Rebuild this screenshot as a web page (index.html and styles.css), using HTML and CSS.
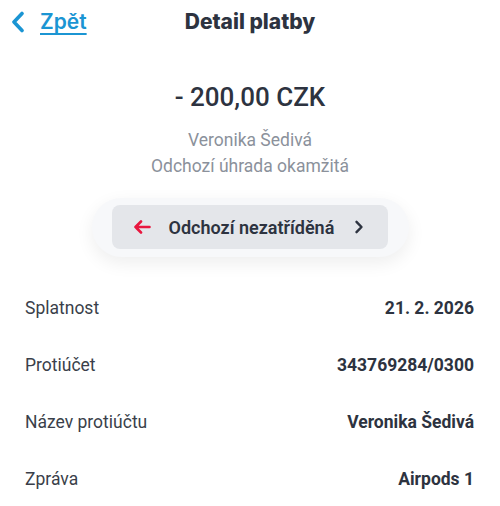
FILE: index.html
```html
<!DOCTYPE html>
<html>
<head>
  <title>Detail platby</title>
  <link rel="stylesheet" href="styles.css">
</head>
<body>
  <div class="header">
    <a class="back" href="#">
      <svg class="back-icon" width="14" height="22" viewBox="0 0 14 22">
        <path d="M11 2.5 L3 11 L11 19.5" fill="none" stroke="#1b95d3" stroke-width="3.6" stroke-linecap="round" stroke-linejoin="round"/>
      </svg>
      <span class="back-text">Zpět</span>
    </a>
    <h1>Detail platby</h1>
  </div>

  <div class="summary">
    <div class="amount">- 200,00 CZK</div>
    <div class="sub">Veronika Šedivá</div>
    <div class="sub">Odchozí úhrada okamžitá</div>
  </div>

  <div class="category-wrap">
    <div class="category-pill">
      <div class="category">
        <svg width="18" height="14" viewBox="0 0 18 14">
          <path d="M16.5 7 H2.5 M8 1.5 L2.5 7 L8 12.5" fill="none" stroke="#e8173f" stroke-width="2.6" stroke-linecap="round" stroke-linejoin="round"/>
        </svg>
        <span class="category-name">Odchozí nezatříděná</span>
        <svg width="10" height="14" viewBox="0 0 10 14">
          <path d="M2.5 1.8 L7.5 7 L2.5 12.2" fill="none" stroke="#2d3340" stroke-width="2.4" stroke-linecap="round" stroke-linejoin="round"/>
        </svg>
      </div>
    </div>
  </div>

  <div class="details">
    <div class="row"><span class="label">Splatnost</span><span class="value">21. 2. 2026</span></div>
    <div class="row"><span class="label">Protiúčet</span><span class="value">343769284/0300</span></div>
    <div class="row"><span class="label">Název protiúčtu</span><span class="value">Veronika Šedivá</span></div>
    <div class="row"><span class="label">Zpráva</span><span class="value">Airpods 1</span></div>
  </div>
</body>
</html>
```

FILE: styles.css
```css
body {
  margin: 0;
  background-color: #fff;
  font-family: Roboto, "Noto Sans", sans-serif;
  color: #2d3340;
}

.header {
  position: relative;
  height: 42px;
  display: flex;
  align-items: center;
  justify-content: center;
}

.header h1 {
  margin: 0;
  font-family: Inter, "Noto Sans", sans-serif;
  font-weight: 800;
  font-size: 21px;
  color: #2d3340;
}

.back {
  position: absolute;
  left: 11px;
  top: 9px;
  display: flex;
  align-items: center;
  gap: 15px;
  text-decoration: none;
}

.back-text {
  font-family: Inter, "Noto Sans", sans-serif;
  font-weight: 600;
  font-size: 21px;
  color: #1b95d3;
  text-decoration: underline;
  text-underline-offset: 4px;
  text-decoration-thickness: 2px;
}

.summary {
  display: flex;
  flex-direction: column;
  align-items: center;
  padding-top: 37px;
}

.amount {
  font-size: 26px;
  font-weight: 500;
  line-height: 36px;
  margin-bottom: 12px;
}

.sub {
  font-size: 17.5px;
  line-height: 26px;
  color: #8b919b;
}

.category-wrap {
  display: flex;
  justify-content: center;
  padding-top: 19px;
}

.category-pill {
  padding: 7px 21px 8px 20px;
  background-color: #f7f8fa;
  border-radius: 30px;
  box-shadow: 0 6px 18px rgba(0, 0, 0, 0.07);
}

.category {
  display: flex;
  align-items: center;
  gap: 18px;
  width: 276px;
  height: 44px;
  box-sizing: border-box;
  padding: 0 24px 0 21px;
  background-color: #e4e6ea;
  border-radius: 8px;
}

.category-name {
  flex: 1;
  font-size: 18px;
  font-weight: 600;
}

.details {
  padding: 22px 26px 0 25px;
}

.row {
  display: flex;
  justify-content: space-between;
  align-items: center;
  height: 57px;
  font-size: 17.5px;
}

.label {
  color: #3a3f4a;
}

.value {
  font-weight: 700;
}
```
